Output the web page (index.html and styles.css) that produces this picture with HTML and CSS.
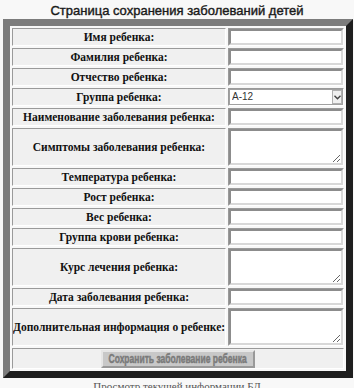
FILE: index.html
```html
<!DOCTYPE html>
<html lang="ru">
<head>
<meta charset="utf-8">
<title>Страница сохранения заболеваний детей</title>
<link rel="stylesheet" href="styles.css">
</head>
<body>
<h1 class="title">Страница сохранения заболеваний детей</h1>
<form class="form">
<table class="grid">
<colgroup><col class="c-label"><col class="c-field"></colgroup>
<tr class="row"><td class="label">Имя ребенка:</td><td class="field"><input class="inp" type="text"></td></tr>
<tr class="row"><td class="label">Фамилия ребенка:</td><td class="field"><input class="inp" type="text"></td></tr>
<tr class="row"><td class="label">Отчество ребенка:</td><td class="field"><input class="inp" type="text"></td></tr>
<tr class="row"><td class="label">Группа ребенка:</td><td class="field"><span class="selwrap"><select class="sel"><option>А-12</option></select><span class="arrow"><svg width="7" height="5" viewBox="0 0 7 5"><path d="M0.5 0.8 L3.5 3.8 L6.5 0.8" fill="none" stroke="#444" stroke-width="1.4"/></svg></span></span></td></tr>
<tr class="row"><td class="label">Наименование заболевания ребенка:</td><td class="field"><input class="inp" type="text"></td></tr>
<tr class="row tall"><td class="label">Симптомы заболевания ребенка:</td><td class="field"><textarea class="area"></textarea></td></tr>
<tr class="row"><td class="label">Температура ребенка:</td><td class="field"><input class="inp" type="text"></td></tr>
<tr class="row"><td class="label">Рост ребенка:</td><td class="field"><input class="inp" type="text"></td></tr>
<tr class="row"><td class="label">Вес ребенка:</td><td class="field"><input class="inp" type="text"></td></tr>
<tr class="row"><td class="label">Группа крови ребенка:</td><td class="field"><input class="inp" type="text"></td></tr>
<tr class="row tall"><td class="label">Курс лечения ребенка:</td><td class="field"><textarea class="area"></textarea></td></tr>
<tr class="row"><td class="label">Дата заболевания ребенка:</td><td class="field"><input class="inp" type="text"></td></tr>
<tr class="row tall"><td class="label">Дополнительная информация о ребенке:</td><td class="field"><textarea class="area"></textarea></td></tr>
<tr class="row"><td class="actions" colspan="2"><button class="btn" type="button"><span class="btn-text">Сохранить заболевание ребенка</span></button></td></tr>
</table>
</form>
<p class="link">Просмотр текущей информации БД</p>
</body>
</html>
```
FILE: styles.css
```css
html, body {
  margin: 0;
  padding: 0;
  background: #f8f8f8;
}
body {
  width: 354px;
  height: 388px;
  overflow: hidden;
}
.title {
  margin: 0;
  padding-top: 3px;
  height: 16px;
  font-family: "Liberation Sans", Arial, sans-serif;
  font-size: 13px;
  font-weight: normal;
  line-height: 15px;
  color: #1a1a1a;
  text-align: center;
  -webkit-text-stroke: 0.4px #1a1a1a;
}
.form {
  margin: 0;
  padding: 0 0 0 3px;
}
.grid {
  width: 350px;
  table-layout: fixed;
  border-collapse: separate;
  border-spacing: 2px;
  border-style: solid;
  border-width: 7px;
  border-color: #7c7c7c #1e1e1e #1e1e1e #7c7c7c;
  background: #f8f8f8;
}
.c-label {
  width: 214px;
}
.c-field {
  width: 116px;
}
.row td {
  border: 1px solid;
  border-color: #9a9a9a #ffffff #ffffff #9a9a9a;
  background: #f0f0f0;
  padding: 0;
  height: 16px;
}
.row.tall td {
  height: 36px;
}
.label {
  font-family: "Liberation Serif", "Times New Roman", serif;
  font-weight: bold;
  font-size: 11.5px;
  line-height: 14px;
  color: #111;
  text-align: center;
  vertical-align: middle;
  white-space: nowrap;
  overflow: hidden;
}
.field {
  vertical-align: middle;
}
.inp, .sel, .area {
  display: block;
  box-sizing: border-box;
  width: 114px;
  margin: 0;
  background: #fff;
  border: 2px solid;
  border-color: #8c8c8c #d8d8d8 #d8d8d8 #8c8c8c;
}
.inp {
  height: 16px;
}
.selwrap {
  position: relative;
  display: block;
  width: 114px;
  height: 16px;
}
.sel {
  -webkit-appearance: none;
  appearance: none;
  height: 16px;
  padding: 0 0 0 2px;
  font-family: "Liberation Sans", Arial, sans-serif;
  font-size: 10px;
  line-height: 14px;
  color: #333;
  border-width: 1px;
  border-color: #a0a0a0;
  border-radius: 0;
}
.arrow {
  position: absolute;
  right: 1px;
  top: 1px;
  width: 10px;
  height: 14px;
  box-sizing: border-box;
  border: 1px solid #b0b0b0;
  background: #f0f0f0;
  display: flex;
  align-items: center;
  justify-content: center;
  pointer-events: none;
}
.area {
  height: 36px;
  resize: both;
}
.actions {
  text-align: center;
  vertical-align: middle;
}
.btn {
  display: inline-flex;
  align-items: center;
  justify-content: center;
  box-sizing: border-box;
  background: #c8c8c8;
  border: 2px solid;
  border-color: #e6e6e6 #999 #999 #e6e6e6;
  height: 18px;
  width: 154px;
  padding: 0;
  vertical-align: middle;
  overflow: hidden;
}
.btn-text {
  flex: none;
  display: inline-block;
  font-family: "Liberation Sans", Arial, sans-serif;
  font-weight: bold;
  font-size: 12.5px;
  line-height: 13px;
  white-space: nowrap;
  color: #7a7a7a;
  -webkit-text-stroke: 0.5px #7a7a7a;
  transform: scaleX(0.68);
}
.link {
  margin: 2px 0 0;
  font-family: "Liberation Serif", "Times New Roman", serif;
  font-size: 11px;
  line-height: 12px;
  color: #555;
  text-align: center;
}
```
